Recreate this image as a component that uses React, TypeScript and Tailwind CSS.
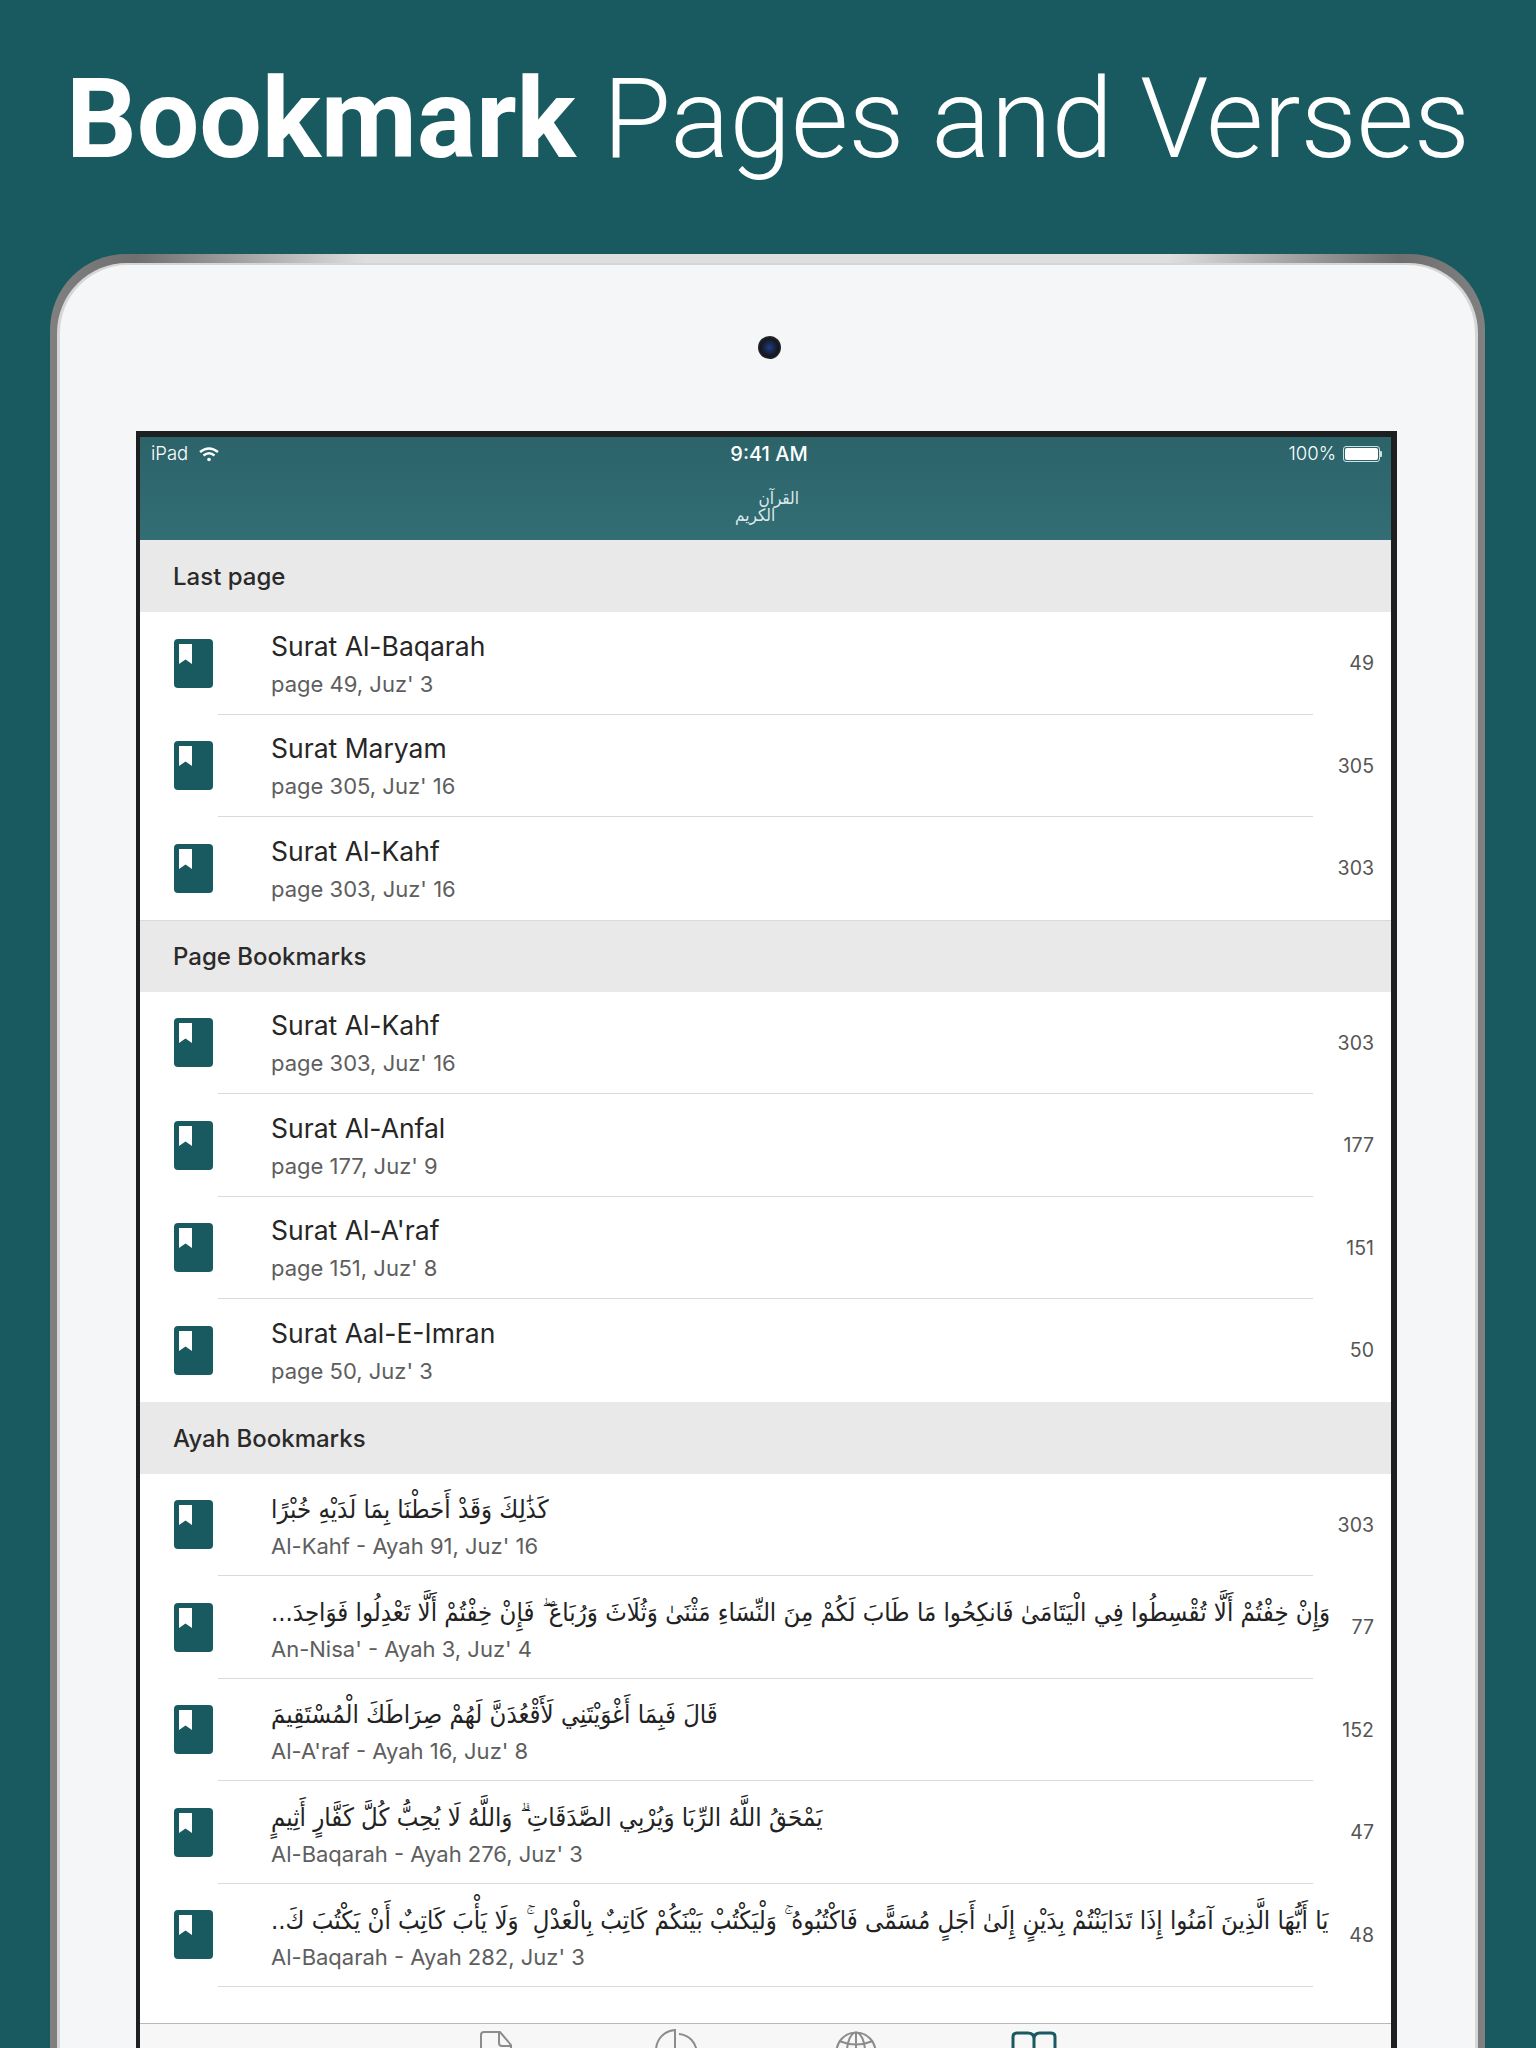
import React from 'react';

type Row = { title: string; sub: string; page: number; arabic?: boolean };

const lastPage: Row[] = [
  { title: 'Surat Al-Baqarah', sub: "page 49, Juz' 3", page: 49 },
  { title: 'Surat Maryam', sub: "page 305, Juz' 16", page: 305 },
  { title: 'Surat Al-Kahf', sub: "page 303, Juz' 16", page: 303 },
];

const pageBookmarks: Row[] = [
  { title: 'Surat Al-Kahf', sub: "page 303, Juz' 16", page: 303 },
  { title: 'Surat Al-Anfal', sub: "page 177, Juz' 9", page: 177 },
  { title: "Surat Al-A'raf", sub: "page 151, Juz' 8", page: 151 },
  { title: 'Surat Aal-E-Imran', sub: "page 50, Juz' 3", page: 50 },
];

const ayahBookmarks: Row[] = [
  { arabic: true, title: 'كَذَٰلِكَ وَقَدْ أَحَطْنَا بِمَا لَدَيْهِ خُبْرًا', sub: "Al-Kahf - Ayah 91, Juz' 16", page: 303 },
  { arabic: true, title: 'وَإِنْ خِفْتُمْ أَلَّا تُقْسِطُوا فِي الْيَتَامَىٰ فَانكِحُوا مَا طَابَ لَكُمْ مِنَ النِّسَاءِ مَثْنَىٰ وَثُلَاثَ وَرُبَاعَ ۖ فَإِنْ خِفْتُمْ أَلَّا تَعْدِلُوا فَوَاحِدَ...', sub: "An-Nisa' - Ayah 3, Juz' 4", page: 77 },
  { arabic: true, title: 'قَالَ فَبِمَا أَغْوَيْتَنِي لَأَقْعُدَنَّ لَهُمْ صِرَاطَكَ الْمُسْتَقِيمَ', sub: "Al-A'raf - Ayah 16, Juz' 8", page: 152 },
  { arabic: true, title: 'يَمْحَقُ اللَّهُ الرِّبَا وَيُرْبِي الصَّدَقَاتِ ۗ وَاللَّهُ لَا يُحِبُّ كُلَّ كَفَّارٍ أَثِيمٍ', sub: "Al-Baqarah - Ayah 276, Juz' 3", page: 47 },
  { arabic: true, title: 'يَا أَيُّهَا الَّذِينَ آمَنُوا إِذَا تَدَايَنْتُمْ بِدَيْنٍ إِلَىٰ أَجَلٍ مُسَمًّى فَاكْتُبُوهُ ۚ وَلْيَكْتُبْ بَيْنَكُمْ كَاتِبٌ بِالْعَدْلِ ۚ وَلَا يَأْبَ كَاتِبٌ أَنْ يَكْتُبَ كَ..', sub: "Al-Baqarah - Ayah 282, Juz' 3", page: 48 },
];

const BookmarkIcon = () => (
  <div className="w-[39px] h-[49px] rounded-[4px] bg-[#195a60] pl-[5px] pt-[5px] shrink-0">
    <svg width="13" height="20" viewBox="0 0 13 20">
      <path d="M0 0H13V20L6.5 15.5L0 20Z" fill="#fff" />
    </svg>
  </div>
);

const ListRow = ({ row, divider }: { row: Row; divider: boolean }) => (
  <div className="h-[102.5px] flex items-center pl-[34px] relative">
    <BookmarkIcon />
    <div className={`ml-[5px] pl-[53px] h-full flex-1 min-w-0 flex flex-col justify-center ${divider ? 'border-b-[1.5px] border-[#d9d9d9]' : ''} mr-[78px] ${row.arabic ? 'pt-[3px]' : ''}`}>
      {row.arabic ? (
        <div
          dir="rtl"
          className="w-[1060px] text-left whitespace-nowrap text-[25.5px] leading-[38px] text-[#222] font-['DejaVu_Sans_Condensed','DejaVu_Sans',sans-serif]"
        >
          {row.title}
        </div>
      ) : (
        <div className="text-[26.5px] leading-[38px] text-[#262626]">{row.title}</div>
      )}
      <div className={`text-[22px] leading-[30px] text-[#5e5e5e] ${row.arabic ? 'mt-[3px]' : 'mt-[4px]'}`}>{row.sub}</div>
    </div>
    <div className="absolute right-[17px] top-[calc(50%+1px)] -translate-y-1/2 text-[19.5px] text-[#555]">{row.page}</div>
  </div>
);

const Section = ({ title, rows, line }: { title: string; rows: Row[]; line?: boolean }) => (
  <div>
    <div className={`h-[72px] bg-[#e9e9e9] flex items-center pl-[33px] pt-[2px] text-[24px] font-medium text-[#2a2a2a] ${line ? 'border-t border-[#dadada]' : ''}`}>{title}</div>
    <div className="bg-white">
      {rows.map((row, i) => (
        <ListRow key={i} row={row} divider={i < rows.length - 1} />
      ))}
    </div>
  </div>
);

const TabBar = () => (
  <div className="h-[60px] bg-[#f7f7f7] border-t border-[#b8b8b8] flex">
    <div className="pl-[340px] pt-[7px]">
      <svg width="32" height="44" viewBox="0 0 32 44" fill="none" stroke="#8c8c8c" strokeWidth="2">
        <path d="M4 1H20L31 14V40H1V4Q1 1 4 1Z" />
        <path d="M19 1V12Q19 15 22 15H31" />
        <path d="M6 22H22" />
      </svg>
    </div>
    <div className="pl-[143px] pt-[5px]">
      <svg width="44" height="44" viewBox="0 0 44 44" fill="none" stroke="#8c8c8c" strokeWidth="2">
        <path d="M20 1V22H1C1 10 9 2 20 1Z" />
        <path d="M24 5C34 6 41 13 42 24" />
      </svg>
    </div>
    <div className="pl-[136px] pt-[7px]">
      <svg width="42" height="42" viewBox="0 0 42 42" fill="none" stroke="#8c8c8c" strokeWidth="2">
        <circle cx="21" cy="21" r="19.5" />
        <ellipse cx="21" cy="21" rx="9" ry="19.5" />
        <path d="M21 1V41M4 10Q21 17 38 10M1 21H41" />
      </svg>
    </div>
    <div className="pl-[134px] pt-[7px]">
      <svg width="46" height="44" viewBox="0 0 46 44" fill="none" stroke="#195a60" strokeWidth="3">
        <path d="M23 8Q23 2 17 2H6Q2 2 2 6V42H44V6Q44 2 40 2H29Q23 2 23 8V42" />
      </svg>
    </div>
  </div>
);

export default function App() {
  return (
    <div className="w-[1536px] h-[2048px] overflow-hidden bg-[#195a60] font-['Inter',sans-serif]">
      <h1 className="h-[254px] pt-[52px] pl-[66px] text-[111px] leading-[134px] text-white whitespace-nowrap font-['Roboto',sans-serif] font-light tracking-[-0.15px]">
        <span className="font-bold">Bookmark</span> Pages and Verses
      </h1>

      <div className="ml-[50px] w-[1435px] h-[1900px] rounded-t-[76px] pt-[9px] px-[7px] bg-[linear-gradient(to_right,#808080_0%,#6f6f6f_6%,#dedede_22%,#dedede_78%,#6f6f6f_94%,#808080_100%)]">
        <div className="h-full rounded-t-[70px] pt-[2px] px-[3px] bg-[#d6d6d6]">
          <div className="h-full rounded-t-[68px] bg-[#f5f6f8] flex flex-col items-center">
            <div className="mt-[71px] ml-[4px] w-[23px] h-[23px] rounded-full bg-[radial-gradient(circle,#1d3f8f_0%,#1a2a55_25%,#15171c_55%,#45484c_100%)] shrink-0" />
            <div className="mt-[72px] ml-[-2px] w-[1261px] flex-1 bg-[#1d1f20] pt-[6px] pl-[4px] pr-[6px]">
              <div className="h-full flex flex-col">
                <header className="h-[103px] bg-[linear-gradient(to_bottom,#2b6369,#336e75)] text-white shrink-0">
                  <div className="h-[34px] grid grid-cols-[1fr_auto_1fr] items-center pl-[11px] pr-[9px] text-[18.5px] font-light">
                    <div className="flex items-center gap-[11px]">
                      <span>iPad</span>
                      <svg width="20" height="15" viewBox="0 0 20 15" fill="none" stroke="#fff" strokeWidth="2.4">
                        <path d="M1 5Q10 -2 19 5" />
                        <path d="M4.5 8.5Q10 4 15.5 8.5" />
                        <circle cx="10" cy="12.5" r="1.8" fill="#fff" stroke="none" />
                      </svg>
                    </div>
                    <span className="ml-[5px] text-[20px] font-medium">9:41 AM</span>
                    <div className="flex items-center justify-end gap-[7px]">
                      <span>100%</span>
                      <div className="flex items-center">
                        <div className="w-[37px] h-[16px] rounded-[3px] border border-[#cfe0e2] p-[1px]">
                          <div className="w-full h-full rounded-[2px] bg-white" />
                        </div>
                        <div className="w-[2px] h-[6px] rounded-r-[1px] bg-[#cfe0e2]" />
                      </div>
                    </div>
                  </div>
                  <div
                    dir="rtl"
                    className="mt-[19px] w-[64px] h-[34px] ml-[595px] flex flex-col text-[17px] leading-[17px] text-[#dfe9ea] font-['DejaVu_Sans_Condensed','DejaVu_Sans',sans-serif]"
                  >
                    <span className="self-start">القرآن</span>
                    <span className="self-end">الكريم</span>
                  </div>
                </header>
                <Section title="Last page" rows={lastPage} />
                <Section title="Page Bookmarks" rows={pageBookmarks} line />
                <Section title="Ayah Bookmarks" rows={ayahBookmarks} />
                <div className="h-[37px] bg-white">
                  <div className="mx-[78px] border-t-[1.5px] border-[#d9d9d9]" />
                </div>
                <TabBar />
              </div>
            </div>
          </div>
        </div>
      </div>
    </div>
  );
}
